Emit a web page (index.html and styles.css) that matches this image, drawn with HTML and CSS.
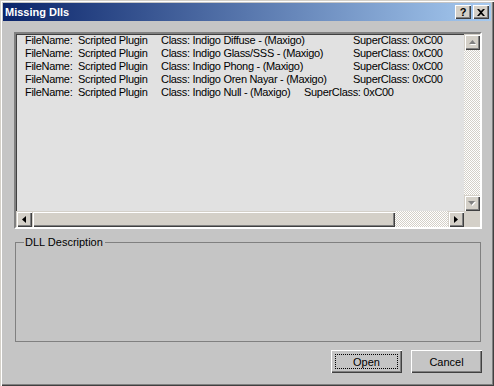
FILE: index.html
```html
<!DOCTYPE html>
<html lang="en">
<head>
    <meta charset="UTF-8">
    <title>Missing Dlls</title>
    <link rel="stylesheet" href="styles.css">
</head>
<body>

<div class="window">
    <div class="titlebar">
        <span class="title">Missing Dlls</span>
        <div class="caption-btns">
            <span class="cbtn help">?</span>
            <span class="cbtn">
                <svg width="8" height="7" viewBox="0 0 8 7"><path d="M0 0h2l2 2 2-2h2L5 3.5 8 7H6L4 5 2 7H0l3-3.5z" fill="#000"/></svg>
            </span>
        </div>
    </div>

    <div class="dialog">
        <!-- list of missing plugins -->
        <div class="listbox">
            <div class="list-rows">
                <div class="row"><span class="c1">FileName:</span><span class="c2">Scripted Plugin</span><span class="c3">Class: Indigo Diffuse - (Maxigo)</span><span>SuperClass: 0xC00</span></div>
                <div class="row"><span class="c1">FileName:</span><span class="c2">Scripted Plugin</span><span class="c3">Class: Indigo Glass/SSS - (Maxigo)</span><span>SuperClass: 0xC00</span></div>
                <div class="row"><span class="c1">FileName:</span><span class="c2">Scripted Plugin</span><span class="c3">Class: Indigo Phong - (Maxigo)</span><span>SuperClass: 0xC00</span></div>
                <div class="row"><span class="c1">FileName:</span><span class="c2">Scripted Plugin</span><span class="c3">Class: Indigo Oren Nayar - (Maxigo)</span><span>SuperClass: 0xC00</span></div>
                <div class="row"><span class="c1">FileName:</span><span class="c2">Scripted Plugin</span><span class="c3 short">Class: Indigo Null - (Maxigo)</span><span>SuperClass: 0xC00</span></div>
            </div>
            <div class="vscroll">
                <span class="sbtn">
                    <svg width="7" height="5" viewBox="0 0 7 5"><path d="M4.5 1L8 5H1z" fill="#fff"/><path d="M3.5 0L7 4H0z" fill="#808080"/></svg>
                </span>
                <span class="track"></span>
                <span class="sbtn">
                    <svg width="8" height="5" viewBox="0 0 8 5"><path d="M1 1h7L4.5 5z" fill="#fff"/><path d="M0 0h7L3.5 4z" fill="#808080"/></svg>
                </span>
            </div>
            <div class="hscroll">
                <span class="sbtn">
                    <svg width="4" height="7" viewBox="0 0 4 7"><path d="M4 0v7L0 3.5z" fill="#000"/></svg>
                </span>
                <span class="thumb"></span>
                <span class="track"></span>
                <span class="sbtn">
                    <svg width="4" height="7" viewBox="0 0 4 7"><path d="M0 0v7l4-3.5z" fill="#000"/></svg>
                </span>
            </div>
            <div class="corner"></div>
        </div>

        <div class="group">
            <span class="legend">DLL Description</span>
        </div>

        <div class="actions">
            <button type="button" class="btn focused"><span>Open</span></button>
            <button type="button" class="btn"><span>Cancel</span></button>
        </div>
    </div>
</div>

</body>
</html>
```

FILE: styles.css
```css
body {
    margin: 0;
    font-family: "Liberation Sans", Arial, sans-serif;
    font-size: 11px;
    color: #000;
    background: #c5c5c5;
}
.window {
    width: 494px;
    height: 386px;
    box-sizing: border-box;
    padding: 3px;
    background: #c5c5c5;
    box-shadow: inset 1px 1px 0 #d4d0c8, inset 2px 2px 0 #fff, inset -1px -1px 0 #404040, inset -2px -2px 0 #808080;
}
.titlebar {
    height: 18px;
    display: flex;
    align-items: center;
    justify-content: space-between;
    background: linear-gradient(to right, #0a246a, #a6caf0);
    padding-left: 2px;
}
.title {
    color: #fff;
    font-weight: bold;
    font-size: 11px;
}
.caption-btns {
    display: flex;
    gap: 2px;
    margin-right: 2px;
}
.cbtn {
    width: 16px;
    height: 14px;
    box-sizing: border-box;
    display: flex;
    align-items: center;
    justify-content: center;
    background: #d4d0c8;
    box-shadow: inset 1px 1px 0 #fff, inset -1px -1px 0 #404040, inset -2px -2px 0 #808080;
}
.cbtn.help {
    font-weight: bold;
    font-size: 11px;
    line-height: 14px;
    padding-bottom: 1px;
}
.dialog {
    padding: 11px 9px 0 11px;
}
.listbox {
    width: 468px;
    height: 197px;
    box-sizing: border-box;
    display: grid;
    grid-template-columns: 448px 16px;
    grid-template-rows: 177px 16px;
    border: 2px solid;
    border-color: #808080 #fff #fff #808080;
    box-shadow: inset 1px 1px 0 #404040;
    background: #e1e1e1;
}
.list-rows {
    padding: 0 0 0 9px;
    overflow: hidden;
    white-space: nowrap;
    line-height: 13px;
    letter-spacing: -0.3px;
}
.row span {
    display: inline-block;
}
.c1 { width: 53px; }
.c2 { width: 83px; }
.c3 { width: 192px; }
.c3.short { width: 143px; }
.vscroll {
    display: flex;
    flex-direction: column;
}
.hscroll {
    display: flex;
}
.sbtn {
    width: 16px;
    height: 16px;
    flex: none;
    box-sizing: border-box;
    display: flex;
    align-items: center;
    justify-content: center;
    background: #d4d0c8;
    box-shadow: inset 1px 1px 0 #d4d0c8, inset 2px 2px 0 #fff, inset -1px -1px 0 #404040, inset -2px -2px 0 #808080;
}
.track {
    flex: 1;
    background: repeating-conic-gradient(#fff 0 25%, #d4d0c8 0 50%) 0 0 / 2px 2px;
}
.thumb {
    width: 363px;
    background: #d4d0c8;
    box-shadow: inset 1px 1px 0 #d4d0c8, inset 2px 2px 0 #fff, inset -1px -1px 0 #404040, inset -2px -2px 0 #808080;
}
.corner {
    background: #d4d0c8;
}
.group {
    position: relative;
    margin: 13px 1px 0 1px;
    height: 100px;
    box-sizing: border-box;
    border: 1px solid #808080;
}
.legend {
    position: absolute;
    top: -7px;
    left: 8px;
    padding: 0 2px 0 1px;
    background: #c5c5c5;
    line-height: 13px;
}
.actions {
    display: flex;
    justify-content: flex-end;
    gap: 9px;
    margin-top: 8px;
}
.btn {
    width: 71px;
    height: 23px;
    padding: 0;
    border: none;
    font-family: inherit;
    font-size: 11px;
    color: #000;
    background: #c5c5c5;
    box-shadow: inset 1px 1px 0 #fff, inset -1px -1px 0 #404040, inset -2px -2px 0 #808080;
    display: flex;
    align-items: center;
    justify-content: center;
    position: relative;
}
.btn.focused::after {
    content: "";
    position: absolute;
    inset: 4px;
    border: 1px dotted #000;
}
```
